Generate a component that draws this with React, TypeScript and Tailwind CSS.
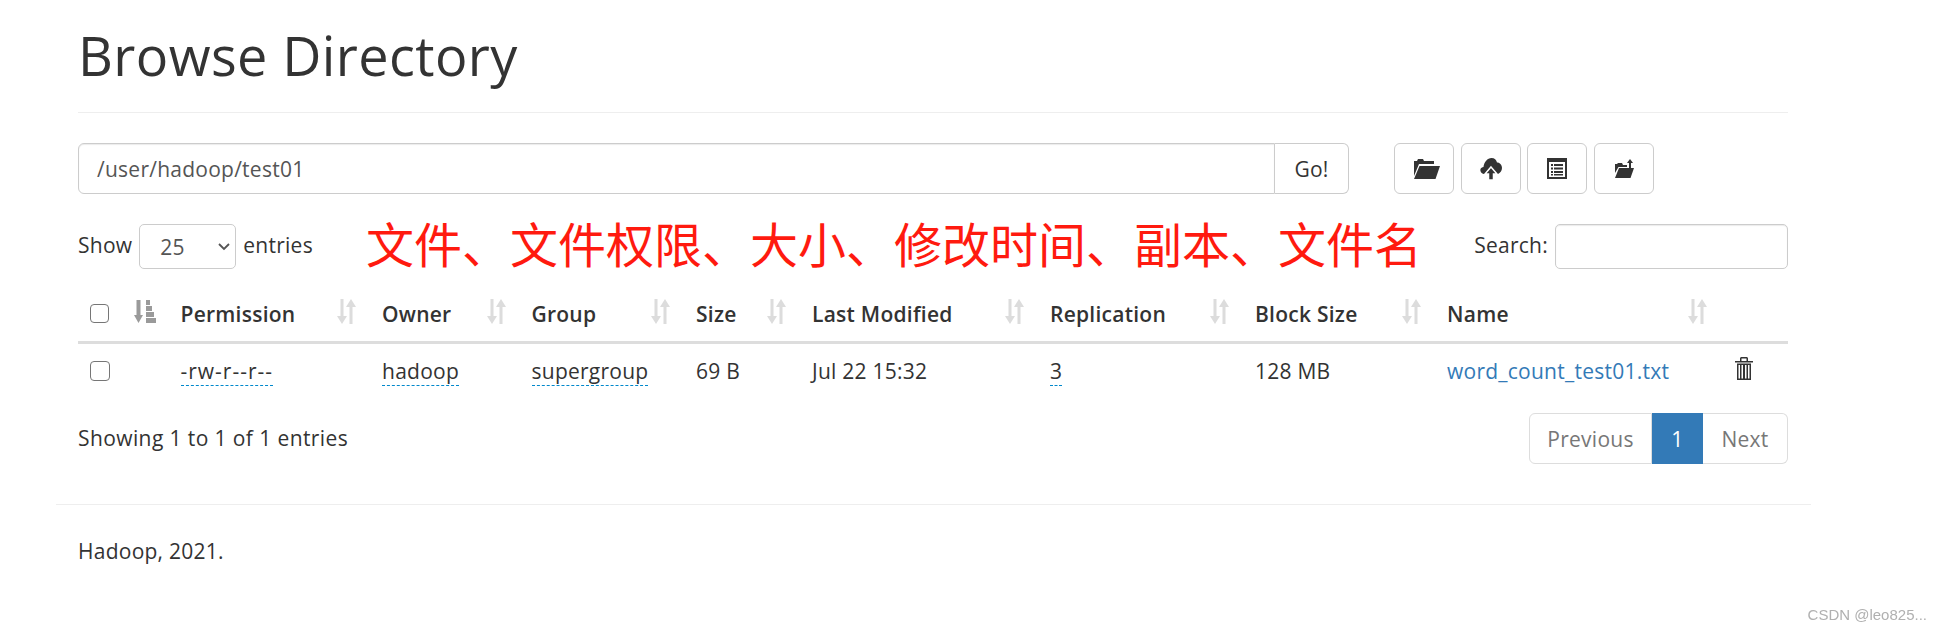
const font = "font-['Open_Sans','Noto_Sans_CJK_SC',sans-serif]";
const dashed = "border-b-[1.500px] border-dashed border-[#0088cc]";

function SortIcon() {
  return (
    <svg viewBox="0 0 20 27" className="w-5 h-[27px] shrink-0 text-[#dcdcdc] -mt-1" fill="currentColor">
      <path d="M4.500 1h3v17h3.500L6 26 1 18h3.500z" />
      <path d="M13.500 26V9H10l5-8 5 8h-3.500v17z" />
    </svg>
  );
}

function SortAscIcon() {
  return (
    <svg viewBox="0 0 22 23" className="w-[22px] h-[23px] shrink-0 text-[#9a9a9a] -mt-1" fill="currentColor">
      <path d="M2.500 0h4v15H9l-4.500 8L0 15h2.500z" />
      <rect x="12" y="0" width="4" height="5" />
      <rect x="12" y="6" width="6" height="5" />
      <rect x="12" y="12" width="8" height="5" />
      <rect x="12" y="18" width="10" height="5" />
    </svg>
  );
}

const columns = [
  { label: "Permission", width: "w-[201.500px]", pr: "pr-[14px]" },
  { label: "Owner", width: "w-[149.500px]", pr: "pr-[14px]" },
  { label: "Group", width: "w-[164.500px]", pr: "pr-[14px]" },
  { label: "Size", width: "w-[116px]", pr: "pr-[14px]" },
  { label: "Last Modified", width: "w-[238px]", pr: "pr-[14px]" },
  { label: "Replication", width: "w-[205px]", pr: "pr-[14px]" },
  { label: "Block Size", width: "w-[192px]", pr: "pr-[14px]" },
  { label: "Name", width: "w-[298px]", pr: "pr-[26px]" },
];

export default function App() {
  return (
    <div className={`${font} w-[1755px] ml-[56px] text-[21px] leading-[30px] tracking-[0.25px] text-[#333] bg-white`}>
      <div className="pl-[22px] pr-[23px]">
        {/* header */}
        <div className="h-[113px] border-b border-[#eee]">
          <h1 className="text-[54px] leading-[59px] pt-[26px] font-normal tracking-[0.4px]">Browse Directory</h1>
        </div>

        {/* path bar */}
        <div className="flex mt-[30px] h-[51px]">
          <div className="w-[1197px] border border-[#ccc] rounded-l-[6px] shadow-[inset_0_1px_1px_rgba(0,0,0,0.08)] px-[18px] flex items-center text-[#555]">
            /user/hadoop/test01
          </div>
          <button className="w-[74px] border border-l-0 border-[#ccc] rounded-r-[6px] text-[#333]">Go!</button>
          <div className="flex gap-[6.500px] ml-[45px]">
            <button className="w-[60px] border border-[#ccc] rounded-[6px] flex items-center justify-center pl-1">
              <svg viewBox="0 0 27 20" className="w-[27px] h-5" fill="#333">
                <path d="M1 2h3l1-2h5l1 2h10v3H6L1 17z" />
                <path d="M6.500 7H27l-4.500 13H1z" />
              </svg>
            </button>
            <button className="w-[60px] border border-[#ccc] rounded-[6px] flex items-center justify-center">
              <svg viewBox="0 0 22 22" className="w-[22px] h-[22px]">
                <path fill="#333" d="M5 16H4C1 15.500 0 13 .5 11c.5-1 1.500-2 3-2C4 4 7.500 0 11.500 0c3 0 5 2 5.500 4.500 3 0 5 2.500 5 5.500 0 3-2 5-4 6z" />
                <path fill="#333" stroke="#fff" strokeWidth="1.500" d="M11 9l6 7h-3.500v6h-5v-6H5z" />
              </svg>
            </button>
            <button className="w-[60px] border border-[#ccc] rounded-[6px] flex items-center justify-center">
              <svg viewBox="0 0 20 21" className="w-5 h-[21px]" fill="#333">
                <path fillRule="evenodd" d="M0 0h20v21H0zM2 4v15h16V4z" />
                <path d="M4 6h2v2H4zM7 6h9v2H7zM4 9.500h2v2H4zM7 9.500h9v2H7zM4 13h2v2H4zM7 13h9v2H7zM4 16h2v1.500H4zM7 16h9v1.500H7z" />
              </svg>
            </button>
            <button className="w-[60px] border border-[#ccc] rounded-[6px] flex items-center justify-center">
              <svg viewBox="0 0 20 19" className="w-5 h-[19px]" fill="#333">
                <path d="M16 0l3 4h-2v5h-2V4h-2z" />
                <path d="M1 5h2l1-1h4l1 2h4v2H4.500L1 14z" />
                <path d="M5 9h15l-3.500 10H1z" />
              </svg>
            </button>
          </div>
        </div>

        {/* show entries / search */}
        <div className="relative flex items-center justify-between mt-[30px] h-[45px]">
          <div className="flex items-center gap-[7px]">
            <span className="pb-1">Show</span>
            <div className="w-[97px] h-[45px] border border-[#ccc] rounded-[5px] flex items-center justify-between pl-[20px] pr-[5px] text-[#555]">
              <span>25</span>
              <svg viewBox="0 0 12 8" className="w-[12px] h-2" fill="none" stroke="#555" strokeWidth="1.800">
                <path d="M1 1l5 5 5-5" />
              </svg>
            </div>
            <span className="pb-1">entries</span>
          </div>
          <div className="absolute left-[288px] top-[-9px] text-[48px] leading-[54px] tracking-normal text-[#ff1a0f] font-['Noto_Sans_CJK_SC',sans-serif]">
            文件、文件权限、大小、修改时间、副本、文件名
          </div>
          <div className="flex items-center gap-[7px]">
            <span className="pb-1">Search:</span>
            <div className="w-[233px] h-[45px] border border-[#ccc] rounded-[5px] shadow-[inset_0_1px_1px_rgba(0,0,0,0.08)]" />
          </div>
        </div>

        {/* table */}
        <table className="w-[1710px] table-fixed border-collapse mt-[18px]">
          <thead>
            <tr className="border-b-[3px] border-[#ddd] h-[55px]">
              <th className="w-[45px] pl-3 text-left font-normal">
                <div className="w-[19px] h-[19px] border border-[#767676] rounded-[4px]" />
              </th>
              <th className="w-[45.500px] pl-[11px] text-left font-normal">
                <SortAscIcon />
              </th>
              {columns.map((col) => (
                <th key={col.label} className={`${col.width} pl-3 ${col.pr} text-left`}>
                  <div className="flex items-center justify-between font-semibold">
                    <span>{col.label}</span>
                    <SortIcon />
                  </div>
                </th>
              ))}
              <th />
            </tr>
          </thead>
          <tbody>
            <tr className="h-[56px]">
              <td className="pl-3">
                <div className="w-[20px] h-[20px] border border-[#767676] rounded-[4px]" />
              </td>
              <td />
              <td className="pl-3"><span className={`${dashed} tracking-[1px]`}>-rw-r--r--</span></td>
              <td className="pl-3"><span className={dashed}>hadoop</span></td>
              <td className="pl-3"><span className={dashed}>supergroup</span></td>
              <td className="pl-3">69 B</td>
              <td className="pl-3">Jul 22 15:32</td>
              <td className="pl-3"><span className={dashed}>3</span></td>
              <td className="pl-3">128 MB</td>
              <td className="pl-3 text-[#337ab7]">word_count_test01.txt</td>
              <td className="pl-[2px]">
                <svg viewBox="0 0 18 23" className="w-[18px] h-[23px] -mt-1" fill="#333">
                  <path d="M5 4V1.500C5 .7 5.700 0 6.500 0h5c.8 0 1.500.7 1.500 1.500V4h-1.500V1.500h-5V4z" />
                  <rect x="0" y="4" width="18" height="1.500" />
                  <path fillRule="evenodd" d="M2 6.500h14V23H2zM3.500 8v13.500h1.500V8zM6.500 8v13.500h1.500V8zM10 8v13.500h1.500V8zM13 8v13.500h1.500V8z" />
                </svg>
              </td>
            </tr>
          </tbody>
        </table>

        {/* info / pagination */}
        <div className="flex items-center justify-between mt-[15px] h-[51px]">
          <span className="pb-[1px] tracking-[0.4px]">Showing 1 to 1 of 1 entries</span>
          <div className="flex h-[51px]">
            <span className="w-[123px] border border-[#ddd] rounded-l-[6px] flex items-center justify-center text-[#777]">Previous</span>
            <span className="w-[51px] bg-[#337ab7] text-white flex items-center justify-center">1</span>
            <span className="w-[85px] border border-l-0 border-[#ddd] rounded-r-[6px] flex items-center justify-center text-[#777]">Next</span>
          </div>
        </div>
      </div>

      {/* footer */}
      <div className="mt-[40px] border-t border-[#eee] px-[22px] pt-[31px]">
        <p>Hadoop, 2021.</p>
      </div>

      <div className="fixed right-[12px] bottom-[6px] text-[15px] leading-[18px] tracking-normal text-[#b0b0b0] font-['Liberation_Sans',sans-serif]">
        CSDN @leo825...
      </div>
    </div>
  );
}
